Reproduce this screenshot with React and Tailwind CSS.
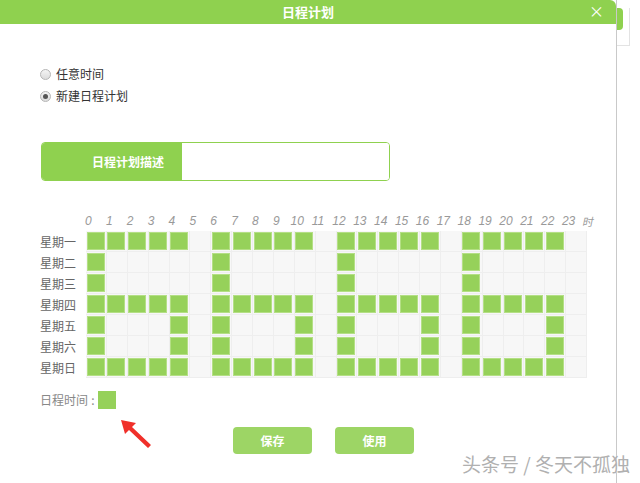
import React from 'react'

const days = ['星期一', '星期二', '星期三', '星期四', '星期五', '星期六', '星期日']

// schedule pattern, one list of lit hours per day
const full = [0, 1, 2, 3, 4, 6, 7, 8, 9, 10, 12, 13, 14, 15, 16, 18, 19, 20, 21, 22]
const left = [0, 6, 12, 18]
const sides = [0, 4, 6, 10, 12, 16, 18, 22]
const schedule = [full, left, left, full, sides, sides, full]

const hours = Array.from({ length: 24 }, (_, i) => i)

const font = { fontFamily: '"Noto Sans CJK SC", "Noto Sans", sans-serif' }

const Radio = ({ checked, label }) => (
  <label className="flex items-center h-[22px] text-[12px] text-[#333]">
    <span className="w-[11px] h-[11px] rounded-full border border-[#b5b5b5] bg-gradient-to-b from-[#f4f4f4] to-[#dcdcdc] flex items-center justify-center">
      {checked && <span className="w-[5px] h-[5px] rounded-full bg-[#555]" />}
    </span>
    <span className="ml-[5px]">{label}</span>
  </label>
)

const App = () => {
  return (
    <div className="flex w-[640px] h-[483px] bg-white overflow-hidden" style={font}>
      {/* ---------------- Dialog ---------------- */}
      <div className="relative w-[617px] h-full border-r border-[#c9c9c9] flex flex-col">
        <div className="h-[24px] bg-[#8fd14f] rounded-tr-[6px] flex items-center justify-center relative">
          <span className="text-white text-[13px] font-bold">日程计划</span>
          <span className="absolute right-[12px] top-[2px] text-white text-[15px] leading-[18px]">×</span>
        </div>

        <div className="pl-[40px] pt-[39px]">
          {/* radios */}
          <div className="flex flex-col">
            <Radio label="任意时间" />
            <Radio checked label="新建日程计划" />
          </div>

          {/* description field */}
          <div className="mt-[35px] ml-[1px] flex w-[349px] h-[39px] rounded-[4px] border border-[#8fd14f] overflow-hidden">
            <div className="w-[140px] bg-[#8fd14f] flex items-center pl-[50px] text-white text-[12px] font-bold">
              日程计划描述
            </div>
            <div className="flex-1 bg-white" />
          </div>

          {/* hour labels */}
          <div className="mt-[32px] flex ml-[38px] h-[16px] items-center text-[12px] italic text-[#999]" style={{ fontFamily: '"Liberation Sans", sans-serif' }}>
            {hours.map(h => (
              <span key={h} className="w-[20.875px] text-center shrink-0">{h}</span>
            ))}
            <span className="ml-[4px] not-italic text-[11px] text-[#999] -skew-x-12" style={font}>时</span>
          </div>

          {/* grid */}
          <div className="mt-[2px] flex">
            <div className="w-[46px] flex flex-col">
              {days.map(d => (
                <div key={d} className="h-[21px] flex items-center text-[12px] text-[#666]">{d}</div>
              ))}
            </div>
            <div className="flex flex-col bg-[#f7f7f7] w-[501px]">
              {schedule.map((row, r) => (
                <div key={r} className="flex h-[21px]">
                  {hours.map(h => (
                    <div key={h} className="w-[20.875px] h-[21px] shrink-0 border-r border-b border-[#eeeeee] p-[0.5px]">
                      {row.includes(h) && (
                        <div className="w-[18px] h-[18px] bg-[#96d15a] border border-[#b4df85]" />
                      )}
                    </div>
                  ))}
                </div>
              ))}
            </div>
          </div>

          {/* legend */}
          <div className="mt-[13px] flex items-center text-[12px] text-[#888]">
            <span>日程时间</span>
            <span className="w-[10px] text-center">:</span>
            <span className="w-[18px] h-[18px] bg-[#96d15a]" />
          </div>

          {/* buttons */}
          <div className="mt-[18px] flex ml-[193px] gap-[23px]">
            <button className="w-[79px] h-[27px] rounded-[4px] bg-[#9dd565] text-white text-[12px] font-bold">保存</button>
            <button className="w-[79px] h-[27px] rounded-[4px] bg-[#9dd565] text-white text-[12px] font-bold">使用</button>
          </div>
        </div>

        {/* red arrow */}
        <svg className="absolute left-[118px] top-[417px]" width="36" height="32" viewBox="0 0 36 32">
          <path d="M3 3 L18 6 L14 10 L33 28 L30 31 L11 13 L7 17 Z" fill="#f0302a" />
        </svg>
      </div>

      {/* ---------------- right strip ---------------- */}
      <div className="relative flex-1">
        <div className="w-[13px] h-[38px] border-r border-b border-[#e3e3e3]">
          <div className="mt-[8px] w-[6px] h-[22px] bg-[#8fd14f] rounded-r-[4px]" />
        </div>
      </div>

      {/* watermark */}
      <div
        className="absolute left-[462px] top-[452px] text-[19px] leading-[24px] text-[#b0b0b0]"
        style={{ ...font, textShadow: '0 0 1px #fff' }}
      >
        头条号 / 冬天不孤独
      </div>
    </div>
  )
}

export default App
